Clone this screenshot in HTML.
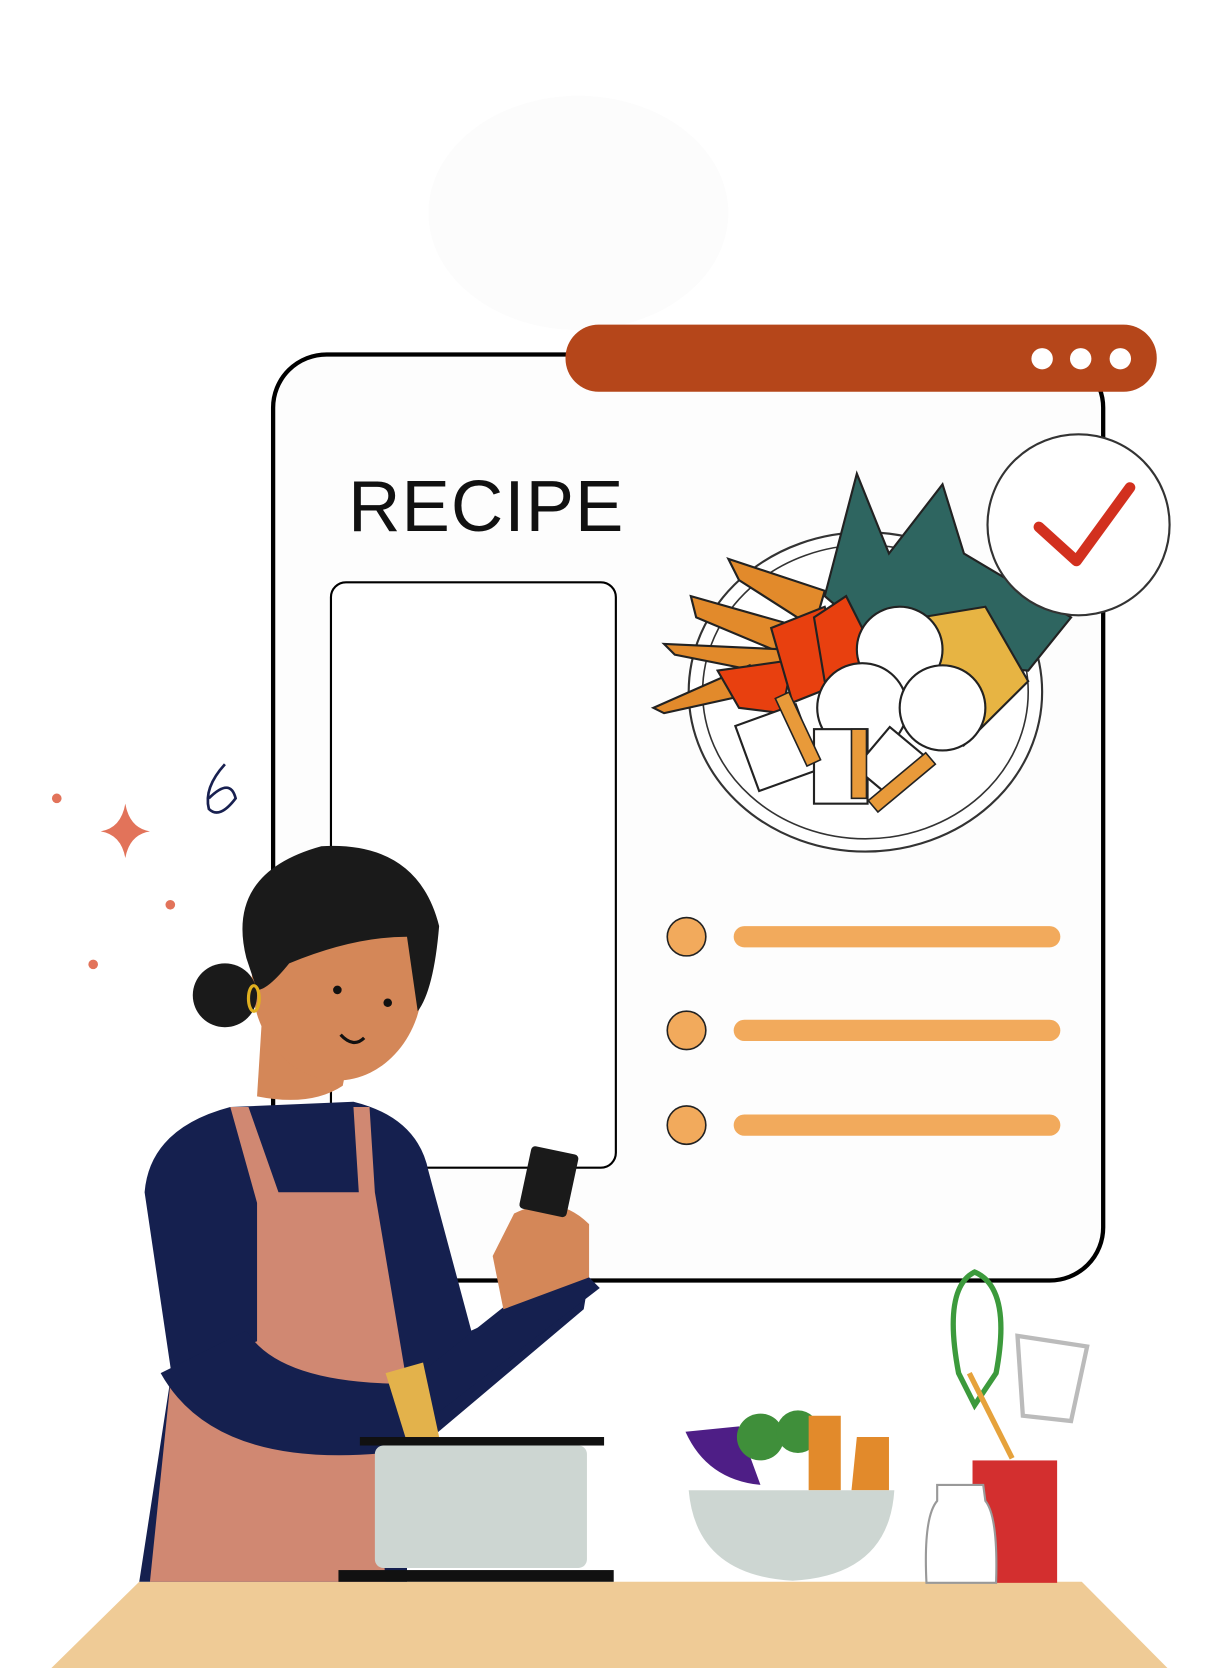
<!DOCTYPE html>
<html><head><style>html,body{margin:0;padding:0;background:#fff}svg{display:block}</style></head>
<body>
<svg width="1221" height="1668" viewBox="0 0 1140 1567" preserveAspectRatio="none" xmlns="http://www.w3.org/2000/svg">
<rect width="1140" height="1567" fill="#fff"/>
<ellipse cx="540" cy="200" rx="140" ry="110" fill="#fcfcfc"/>
<!-- card -->
<rect x="255" y="333" width="775" height="870" rx="50" fill="#fdfdfd" stroke="#000" stroke-width="4"/>
<rect x="528" y="305" width="552" height="63" rx="31" fill="#b5461a"/>
<circle cx="973" cy="337" r="10" fill="#fff"/><circle cx="1009" cy="337" r="10" fill="#fff"/><circle cx="1046" cy="337" r="10" fill="#fff"/>
<text x="325" y="499" font-family="Liberation Sans, sans-serif" font-size="68" letter-spacing="1" textLength="258" lengthAdjust="spacingAndGlyphs" fill="#111">RECIPE</text>
<rect x="309" y="547" width="266" height="550" rx="14" fill="#fff" stroke="#000" stroke-width="2"/>
<!-- list -->
<g fill="#f2aa5c" stroke="#222" stroke-width="1.5">
<circle cx="641" cy="880" r="18"/><circle cx="641" cy="968" r="18"/><circle cx="641" cy="1057" r="18"/></g>
<g fill="#f2aa5c"><rect x="685" y="870" width="305" height="20" rx="10"/><rect x="685" y="958" width="305" height="20" rx="10"/><rect x="685" y="1047" width="305" height="20" rx="10"/></g>
<!-- plate -->
<ellipse cx="808" cy="650" rx="165" ry="150" fill="#fff" stroke="#333" stroke-width="2"/>
<ellipse cx="808" cy="650" rx="152" ry="138" fill="none" stroke="#333" stroke-width="1.5"/>
<path d="M770 560 L800 445 L830 520 L880 455 L900 520 L1000 580 L960 630 L840 620Z" fill="#2e6560" stroke="#222" stroke-width="2"/>
<path d="M860 580 L920 570 L960 640 L900 700Z" fill="#e7b443" stroke="#222" stroke-width="2"/>
<g fill="#e28a2b" stroke="#222" stroke-width="2">
<path d="M680 525 L770 555 L760 590 L690 545Z"/><path d="M645 560 L750 590 L745 620 L650 580Z"/><path d="M620 605 L730 610 L730 635 L630 615Z"/><path d="M610 665 L700 625 L710 650 L620 670Z"/></g>
<g fill="#e8400f" stroke="#222" stroke-width="2"><path d="M670 630 L740 620 L730 670 L690 665Z"/><path d="M720 590 L770 570 L790 640 L740 660Z"/><path d="M760 580 L790 560 L810 600 L790 660 L770 640Z"/></g>
<g fill="#fff" stroke="#222" stroke-width="2">
<circle cx="840" cy="610" r="40"/><circle cx="805" cy="665" r="42"/><circle cx="880" cy="665" r="40"/>
<rect x="695" y="670" width="60" height="65" transform="rotate(-20 725 700)"/><rect x="760" y="685" width="50" height="70"/><rect x="810" y="690" width="45" height="50" transform="rotate(40 830 715)"/></g>
<g fill="#e89a3a" stroke="#222" stroke-width="1.5"><rect x="738" y="650" width="14" height="70" transform="rotate(-25 745 685)"/><rect x="795" y="685" width="14" height="65"/><rect x="835" y="700" width="14" height="70" transform="rotate(50 842 735)"/></g>
<!-- check -->
<circle cx="1007" cy="493" r="85" fill="#fff" stroke="#333" stroke-width="2"/>
<path d="M970 495 L1005 527 L1055 458" fill="none" stroke="#d2301e" stroke-width="10" stroke-linecap="round" stroke-linejoin="round"/>
<!-- sparkles -->
<circle cx="53" cy="750" r="4.5" fill="#e2735a"/><circle cx="159" cy="850" r="4.5" fill="#e2735a"/><circle cx="87" cy="906" r="4.5" fill="#e2735a"/>
<path d="M117 755 Q121 778 140 781 Q121 784 117 806 Q113 784 94 781 Q113 778 117 755Z" fill="#e2735a"/>
<path d="M210 718 Q190 740 195 760 Q205 770 220 750 Q215 730 195 750" fill="none" stroke="#182050" stroke-width="2.5"/>
<!-- table -->
<path d="M130 1486 L1010 1486 L1090 1567 L48 1567Z" fill="#efcb96"/>
<!-- woman -->
<path d="M130 1486 L160 1290 L135 1120 Q140 1060 215 1040 L330 1035 Q390 1050 400 1100 L440 1250 L550 1200 L545 1230 L380 1370 L380 1486Z" fill="#15204f"/>
<path d="M215 1040 L240 1130 L240 1260 L160 1290 L140 1486 L360 1486 L350 1350 L380 1300 L350 1120 L345 1040 L330 1040 L335 1120 L260 1120 L232 1040Z" fill="#d08872"/>
<path d="M150 1290 Q200 1380 360 1365 L560 1210 L530 1180 L380 1300 Q260 1300 230 1250Z" fill="#15204f"/>
<path d="M245 950 L240 1030 Q290 1040 320 1020 L330 970Z" fill="#d48758"/>
<ellipse cx="315" cy="920" rx="80" ry="95" fill="#d48758"/>
<path d="M230 900 Q210 820 300 795 Q390 790 410 870 Q405 930 390 950 L380 880 Q330 880 270 905 Q250 930 240 930Z" fill="#1a1a1a"/>
<circle cx="210" cy="935" r="30" fill="#1a1a1a"/>
<ellipse cx="237" cy="938" rx="5" ry="12" fill="none" stroke="#e0b020" stroke-width="3"/>
<circle cx="315" cy="930" r="4" fill="#111"/><circle cx="362" cy="942" r="4" fill="#111"/>
<path d="M318 972 Q330 985 340 975" fill="none" stroke="#111" stroke-width="3"/>
<path d="M460 1180 L480 1140 Q520 1120 550 1150 L550 1200 L470 1230Z" fill="#d48758"/>
<rect x="490" y="1080" width="45" height="60" rx="4" fill="#1a1a1a" transform="rotate(12 512 1110)"/>
<!-- pot -->
<path d="M360 1290 L395 1280 L410 1350 L380 1355Z" fill="#e3b24b"/>
<rect x="336" y="1350" width="228" height="8" fill="#111"/>
<rect x="350" y="1358" width="198" height="115" rx="8" fill="#cdd6d2"/>
<rect x="316" y="1475" width="257" height="11" fill="#111"/>
<!-- bowl -->
<path d="M640 1345 Q660 1390 710 1395 L690 1340Z" fill="#4e1e86"/>
<circle cx="710" cy="1350" r="22" fill="#3f8f3a"/><circle cx="745" cy="1345" r="20" fill="#3f8f3a"/>
<path d="M755 1330 L785 1330 L785 1400 L755 1400Z" fill="#e28a2b"/><path d="M800 1350 L830 1350 L830 1400 L795 1400Z" fill="#e28a2b"/>
<path d="M643 1400 L835 1400 Q830 1480 740 1485 Q650 1480 643 1400Z" fill="#cdd6d2"/>
<!-- utensils -->
<path d="M910 1195 Q880 1210 895 1290 L910 1320 L930 1290 Q945 1210 910 1195Z" fill="none" stroke="#3c9a3c" stroke-width="5"/>
<path d="M950 1255 L1015 1265 L1000 1335 L955 1330Z" fill="#fff" stroke="#bbb" stroke-width="4"/>
<rect x="908" y="1372" width="79" height="115" fill="#d32f2f"/>
<path d="M905 1290 L945 1370" stroke="#e6a23c" stroke-width="5"/>
<path d="M875 1395 L918 1395 L920 1410 Q932 1425 930 1487 L865 1487 Q862 1425 875 1410Z" fill="#fff" stroke="#999" stroke-width="2"/>
</svg>
</body></html>
